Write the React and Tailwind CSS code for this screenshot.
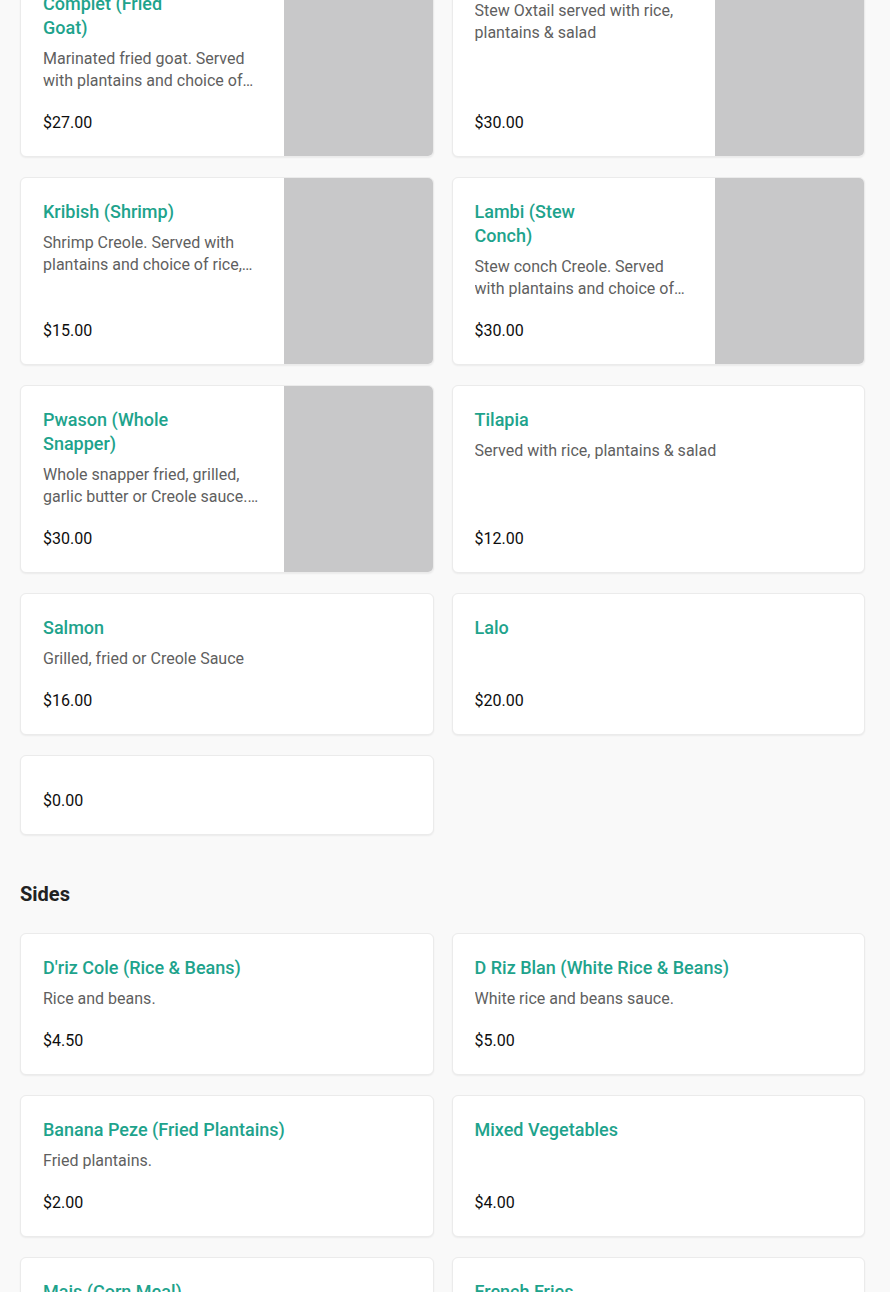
import React from "react";

const mains = [
  { name: "Tasso Kabrit Complet (Fried Goat)", desc: "Marinated fried goat. Served with plantains and choice of rice & salad", price: "$27.00", image: true },
  { name: "Oxtail", desc: "Stew Oxtail served with rice, plantains & salad", price: "$30.00", image: true },
  { name: "Kribish (Shrimp)", desc: "Shrimp Creole. Served with plantains and choice of rice, salad", price: "$15.00", image: true },
  { name: "Lambi (Stew Conch)", desc: "Stew conch Creole. Served with plantains and choice of rice & salad", price: "$30.00", image: true },
  { name: "Pwason (Whole Snapper)", desc: "Whole snapper fried, grilled, garlic butter or Creole sauce. Served with rice & plantains", price: "$30.00", image: true },
  { name: "Tilapia", desc: "Served with rice, plantains & salad", price: "$12.00" },
  { name: "Salmon", desc: "Grilled, fried or Creole Sauce", price: "$16.00" },
  { name: "Lalo", desc: "", price: "$20.00" },
  { name: "", desc: "", price: "$0.00" },
];

const sides = [
  { name: "D'riz Cole (Rice & Beans)", desc: "Rice and beans.", price: "$4.50" },
  { name: "D Riz Blan (White Rice & Beans)", desc: "White rice and beans sauce.", price: "$5.00" },
  { name: "Banana Peze (Fried Plantains)", desc: "Fried plantains.", price: "$2.00" },
  { name: "Mixed Vegetables", desc: "", price: "$4.00" },
  { name: "Mais (Corn Meal)", desc: "", price: "$4.00" },
  { name: "French Fries", desc: "", price: "$3.00" },
];

function ItemCard({ item }) {
  const empty = !item.name && !item.desc;
  return (
    <div className="flex bg-white rounded-md border border-[#ebebeb] shadow-[0_1px_2px_rgba(0,0,0,0.06)] overflow-hidden">
      <div className={`flex flex-col flex-1 min-w-0 pl-[22px] pr-6 pb-[22px] ${empty ? "pt-[34px]" : "pt-[22px]"} ${item.image ? "min-h-[186px]" : ""}`}>
        {item.name && (
          <h3 className={`text-[18px] leading-6 font-medium text-[#1ea38c] ${item.image ? "max-w-[150px]" : ""}`}>
            {item.name}
          </h3>
        )}
        {item.desc ? (
          <p className="mt-[8px] text-[16px] leading-[22px] text-[#5f5f5f] line-clamp-2">{item.desc}</p>
        ) : null}
        <div className={`mt-auto ${empty ? "" : "pt-5"} text-[16px] leading-[22px] font-normal text-[#0d0d0d]`}>
          {item.price}
        </div>
      </div>
      {item.image && <div className="w-[149px] shrink-0 bg-[#c8c8c9]" />}
    </div>
  );
}

export default function App() {
  return (
    <div className="min-h-screen bg-[#f9f9f9] overflow-hidden" style={{ fontFamily: "Roboto, 'Liberation Sans', sans-serif" }}>
      <div className="mt-[-55px] pl-5 pr-[25px] pb-10">
        <div className="grid grid-cols-2 gap-x-[18px] gap-y-[20px] items-stretch">
          {mains.map((item, i) => (
            <ItemCard key={i} item={item} />
          ))}
        </div>

        <h2 className="mt-[45px] mb-[25px] text-[20px] leading-7 font-bold text-[#222]">Sides</h2>

        <div className="grid grid-cols-2 gap-x-[18px] gap-y-[20px]">
          {sides.map((item, i) => (
            <ItemCard key={i} item={item} />
          ))}
        </div>
      </div>
    </div>
  );
}
